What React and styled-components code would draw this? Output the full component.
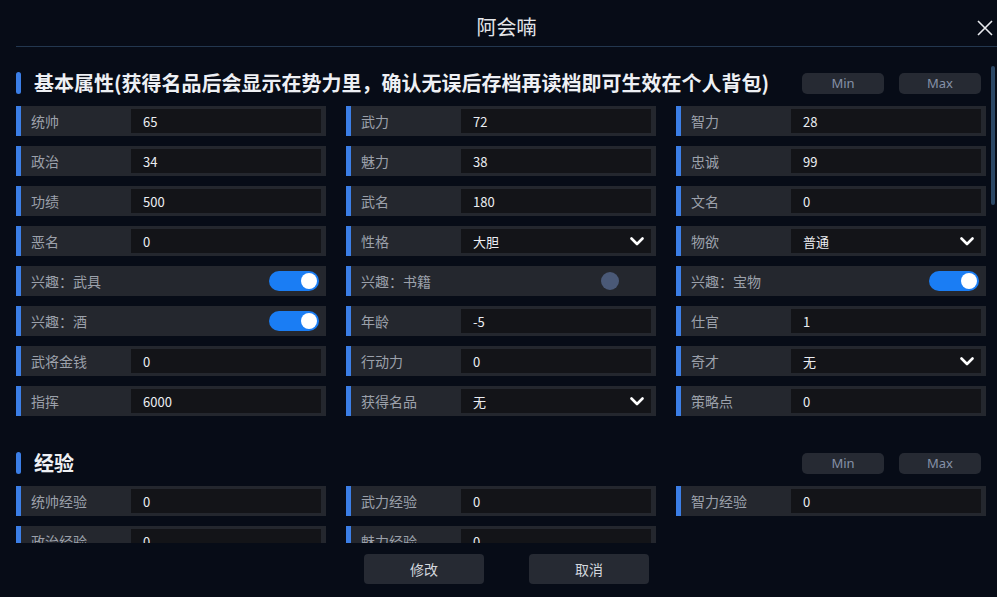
import styled, { createGlobalStyle } from 'styled-components';

const GlobalStyle = createGlobalStyle`
    html, body {
        margin: 0;
        padding: 0;
        background: #070c17;
        font-family: 'Noto Sans CJK SC', 'Noto Sans', sans-serif;
    }
`;

const Dialog = styled.div`
    width: 997px;
    height: 597px;
    display: flex;
    flex-direction: column;
    background: #070c17;
    overflow: hidden;
`;

const Header = styled.div`
    height: 46px;
    margin-left: 16px;
    border-bottom: 1px solid #23374f;
    display: flex;
    align-items: center;
    justify-content: center;
    position: relative;
    flex-shrink: 0;
`;

const Title = styled.div`
    font-size: 20px;
    color: #e4e6ea;
    margin-top: 6px;
    margin-left: 0;
`;

const Close = styled.button`
    position: absolute;
    right: 4px;
    top: 20px;
    width: 16px;
    height: 16px;
    padding: 0;
    border: none;
    background: none;
`;

const Body = styled.div`
    flex: 1;
    min-height: 0;
    display: flex;
    padding-left: 16px;
`;

const Content = styled.div`
    width: 970px;
    overflow: hidden;
`;

const ScrollTrack = styled.div`
    width: 4px;
    margin-left: 5px;
    padding-top: 19px;
`;

const ScrollThumb = styled.div`
    height: 139px;
    background: #2c4866;
    border-radius: 2px;
`;

// section header
const Section = styled.section`
    margin-top: ${(p) => p.$top}px;
`;

const SectionHead = styled.div`
    height: 22px;
    display: flex;
    align-items: center;
    padding-right: 5px;
    margin-bottom: 12px;
`;

const SectionBar = styled.div`
    width: 5px;
    height: 22px;
    border-radius: 3px;
    background: #3b7ee6;
    margin-right: 13px;
`;

const SectionTitle = styled.h2`
    flex: 1;
    margin: 0;
    font-size: 20px;
    font-weight: 700;
    color: #eef0f4;
    white-space: nowrap;
    line-height: 22px;
`;

const SmallButton = styled.button`
    width: 82px;
    height: 21px;
    margin-left: 15px;
    border: none;
    border-radius: 5px;
    background: #262a33;
    color: #8591a8;
    font-family: 'Noto Sans', sans-serif;
    font-size: 13px;
    padding: 0;
`;

const Grid = styled.div`
    display: grid;
    grid-template-columns: repeat(3, 310px);
    column-gap: 20px;
    row-gap: 10px;
`;

const Row = styled.div`
    height: 30px;
    display: flex;
    align-items: center;
    background: #24272e;
    border-left: 5px solid #3b7ee6;
    padding-right: 5px;
`;

const Label = styled.span`
    width: 100px;
    flex-shrink: 0;
    padding-left: 10px;
    font-size: 14px;
    color: #9ca1ab;
    white-space: nowrap;
`;

const Field = styled.div`
    flex: 1;
    height: 24px;
    display: flex;
    align-items: center;
    justify-content: space-between;
    background: #131418;
    padding: 0 7px 0 12px;
    font-size: 13px;
    color: #eceef2;
`;

const Track = styled.div`
    margin-left: auto;
    margin-right: 2px;
    width: 50px;
    height: 20px;
    border-radius: 10px;
    background: ${(p) => (p.$on ? '#1a7df4' : 'transparent')};
    display: flex;
    align-items: center;
    justify-content: ${(p) => (p.$on ? 'flex-end' : 'flex-start')};
    padding: 0 2px;
    box-sizing: border-box;
`;

const Knob = styled.div`
    width: ${(p) => (p.$on ? 16 : 18)}px;
    height: ${(p) => (p.$on ? 16 : 18)}px;
    border-radius: 50%;
    background: ${(p) => (p.$on ? '#ffffff' : '#4a5977')};
`;

const Footer = styled.div`
    height: 54px;
    flex-shrink: 0;
    display: flex;
    justify-content: center;
    align-items: flex-start;
    gap: 45px;
    padding-top: 11px;
    padding-left: 16px;
    box-sizing: border-box;
`;

const FooterButton = styled.button`
    width: 120px;
    height: 30px;
    border: none;
    border-radius: 4px;
    background: #262a33;
    color: #d3d7de;
    font-family: inherit;
    font-size: 14px;
`;

const Chevron = () => (
    <svg width='14' height='9' viewBox='0 0 14 9'>
        <polyline
            points='1.5,1.5 7,7 12.5,1.5'
            fill='none'
            stroke='#ffffff'
            strokeWidth='2.6'
            strokeLinecap='round'
            strokeLinejoin='round'
        />
    </svg>
);

const baseRows = [
    { label: '统帅', value: '65' },
    { label: '武力', value: '72' },
    { label: '智力', value: '28' },
    { label: '政治', value: '34' },
    { label: '魅力', value: '38' },
    { label: '忠诚', value: '99' },
    { label: '功绩', value: '500' },
    { label: '武名', value: '180' },
    { label: '文名', value: '0' },
    { label: '恶名', value: '0' },
    { label: '性格', value: '大胆', select: true },
    { label: '物欲', value: '普通', select: true },
    { label: '兴趣：武具', toggle: true, on: true },
    { label: '兴趣：书籍', toggle: true, on: false },
    { label: '兴趣：宝物', toggle: true, on: true },
    { label: '兴趣：酒', toggle: true, on: true },
    { label: '年龄', value: '-5' },
    { label: '仕官', value: '1' },
    { label: '武将金钱', value: '0' },
    { label: '行动力', value: '0' },
    { label: '奇才', value: '无', select: true },
    { label: '指挥', value: '6000' },
    { label: '获得名品', value: '无', select: true },
    { label: '策略点', value: '0' },
];

const expRows = [
    { label: '统帅经验', value: '0' },
    { label: '武力经验', value: '0' },
    { label: '智力经验', value: '0' },
    { label: '政治经验', value: '0' },
    { label: '魅力经验', value: '0' },
];

const AttrRow = ({ item }) => (
    <Row>
        <Label>{item.label}</Label>
        {item.toggle ? (
            <Track $on={item.on}>
                <Knob $on={item.on} />
            </Track>
        ) : (
            <Field>
                <span>{item.value}</span>
                {item.select && <Chevron />}
            </Field>
        )}
    </Row>
);

const App = () => {
    return (
        <Dialog>
            <GlobalStyle />
            <Header>
                <Title>阿会喃</Title>
                <Close aria-label='关闭'>
                    <svg width='16' height='16' viewBox='0 0 16 16'>
                        <path
                            d='M1 1 L15 15 M15 1 L1 15'
                            stroke='#e8eaee'
                            strokeWidth='1.6'
                        />
                    </svg>
                </Close>
            </Header>
            <Body>
                <Content>
                    <Section $top={25}>
                        <SectionHead>
                            <SectionBar />
                            <SectionTitle>
                                基本属性(获得名品后会显示在势力里，确认无误后存档再读档即可生效在个人背包)
                            </SectionTitle>
                            <SmallButton>Min</SmallButton>
                            <SmallButton>Max</SmallButton>
                        </SectionHead>
                        <Grid>
                            {baseRows.map((item) => (
                                <AttrRow key={item.label} item={item} />
                            ))}
                        </Grid>
                    </Section>
                    <Section $top={36}>
                        <SectionHead>
                            <SectionBar />
                            <SectionTitle>经验</SectionTitle>
                            <SmallButton>Min</SmallButton>
                            <SmallButton>Max</SmallButton>
                        </SectionHead>
                        <Grid>
                            {expRows.map((item) => (
                                <AttrRow key={item.label} item={item} />
                            ))}
                        </Grid>
                    </Section>
                </Content>
                <ScrollTrack>
                    <ScrollThumb />
                </ScrollTrack>
            </Body>
            <Footer>
                <FooterButton>修改</FooterButton>
                <FooterButton>取消</FooterButton>
            </Footer>
        </Dialog>
    );
};

export default App;
